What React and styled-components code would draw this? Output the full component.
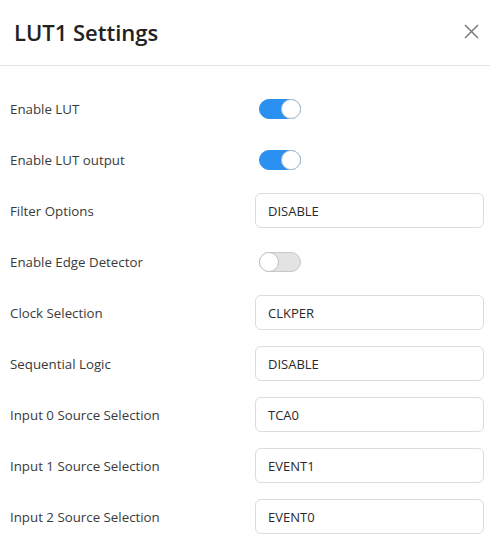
import React from "react";
import styled, { createGlobalStyle } from "styled-components";

const Global = createGlobalStyle`
  html, body { margin: 0; padding: 0; background: #fff; }
  body { font-family: "Open Sans", "Noto Sans", "Liberation Sans", sans-serif; color: #333; }
  * { box-sizing: border-box; }
`;

const Dialog = styled.div`
  width: 490px;
  height: 538px;
  overflow: hidden;
  background: #fff;
  display: flex;
  flex-direction: column;
`;

const Header = styled.div`
  height: 66px;
  flex: none;
  display: flex;
  align-items: center;
  justify-content: space-between;
  padding: 0 9px 2px 14px;
  border-bottom: 1px solid #e2e2e2;
`;

const Title = styled.h1`
  margin: 0;
  font-size: 22px;
  font-weight: 600;
  color: #222;
`;

const CloseButton = styled.button`
  width: 20px;
  height: 20px;
  padding: 0;
  border: none;
  background: transparent;
  display: flex;
  align-items: center;
  justify-content: center;
  cursor: pointer;
`;

const Body = styled.div`
  display: flex;
  flex-direction: column;
  gap: 16px;
  padding: 25px 6px 0 10px;
`;

const Row = styled.div`
  display: grid;
  grid-template-columns: 245px 1fr;
  align-items: center;
  height: 35px;
`;

const Label = styled.span`
  font-size: 13.3px;
  color: #3a3a3a;
`;

const Field = styled.div`
  height: 35px;
  border: 1px solid #dcdcdc;
  border-radius: 6px;
  display: flex;
  align-items: center;
  padding-left: 12px;
  font-size: 13px;
  color: #2a2a2a;
`;

const Track = styled.span`
  margin-left: 4px;
  width: 42px;
  height: 20px;
  border-radius: 10px;
  background: ${(p) => (p.$on ? "#2b90f0" : "#e3e3e3")};
  border: 1px solid ${(p) => (p.$on ? "#2b90f0" : "#c8c8c8")};
  display: flex;
  align-items: center;
  justify-content: ${(p) => (p.$on ? "flex-end" : "flex-start")};
`;

const Knob = styled.span`
  width: 20px;
  height: 20px;
  margin: -1px;
  border-radius: 50%;
  background: #fff;
  border: 1px solid #b9c3cc;
`;

const Toggle = ({ on }) => (
  <Track $on={on}>
    <Knob />
  </Track>
);

const rows = [
  { label: "Enable LUT", toggle: true },
  { label: "Enable LUT output", toggle: true },
  { label: "Filter Options", value: "DISABLE" },
  { label: "Enable Edge Detector", toggle: false },
  { label: "Clock Selection", value: "CLKPER" },
  { label: "Sequential Logic", value: "DISABLE" },
  { label: "Input 0 Source Selection", value: "TCA0" },
  { label: "Input 1 Source Selection", value: "EVENT1" },
  { label: "Input 2 Source Selection", value: "EVENT0" },
];

export default function App() {
  return (
    <>
      <Global />
      <Dialog>
        <Header>
          <Title>LUT1 Settings</Title>
          <CloseButton aria-label="Close">
            <svg width="15" height="15" viewBox="0 0 15 15">
              <path d="M1 1L14 14M14 1L1 14" stroke="#7a7a7a" strokeWidth="1.5" fill="none" />
            </svg>
          </CloseButton>
        </Header>
        <Body>
          {rows.map((r) => (
            <Row key={r.label}>
              <Label>{r.label}</Label>
              {"value" in r ? <Field>{r.value}</Field> : <Toggle on={r.toggle} />}
            </Row>
          ))}
        </Body>
      </Dialog>
    </>
  );
}
